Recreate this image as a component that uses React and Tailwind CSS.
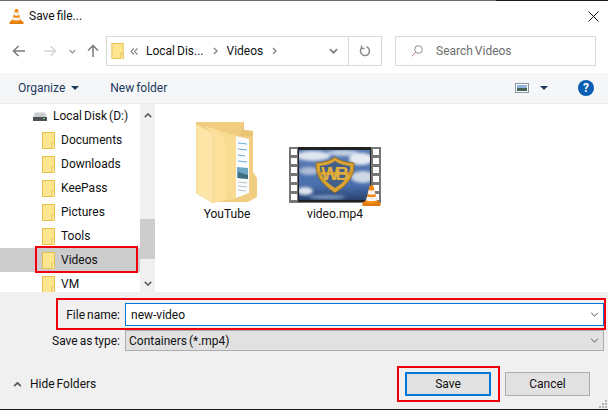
import { useId } from 'react'

const font = { fontFamily: 'Roboto, "Noto Sans", sans-serif' }

function Cone({ className }) {
  return (
    <svg viewBox="0 0 16 17" className={className}>
      <path d="M0.5 14.5 L3.5 12 H12.5 L15.5 14.5 V16.5 H0.5 Z" fill="#e07b0c" />
      <path d="M6.6 0.5 H9.4 L13 14 Q8 16 3 14 Z" fill="#f28a10" />
      <path d="M6 3.6 Q8 4.6 10 3.6 L10.9 7 Q8 8.2 5.1 7 Z" fill="#f4f4f4" />
      <path d="M4.6 9.2 Q8 10.5 11.4 9.2 L12.2 12 Q8 13.4 3.8 12 Z" fill="#f4f4f4" />
    </svg>
  )
}

function SmallFolder({ className }) {
  return (
    <svg viewBox="0 0 13 17" className={className}>
      <rect x="0.5" y="0.5" width="12" height="16" fill="#fde68f" stroke="#e8c04f" />
      <path d="M10 16.5 V10.5 H12.5 V16.5" fill="#ffefb0" stroke="#e8c04f" />
    </svg>
  )
}

function BigFolder() {
  return (
    <svg viewBox="0 0 62 82" className="h-[82px] w-[62px]">
      <path d="M0 0 H48 V8 L57 9 V50 L61 56 V75 L52 80 H20 L0 20 Z" fill="#f0cd80" />
      <path d="M48 0 V8 L57 9 V14 H44 Z" fill="#e9c374" />
      <path d="M40 14 L53 17 V71 L40 76 Z" fill="#fafbfd" />
      <path d="M42 21 L51 22 M42 27 L51 28 M42 33 L49 34 M42 39 L51 40" stroke="#62aee2" strokeWidth="1" />
      <path d="M41 45 L52 46 V57 L41 56 Z" fill="#6da6c4" />
      <path d="M42 50 L52 53 V57 L42 56 Z" fill="#3f6e7e" />
      <path d="M42 60 L51 61 M42 64 L51 65 M42 68 L50 69" stroke="#bcc0c6" strokeWidth="1" />
      <path d="M8 4 L40 14 V76 L17 81 V11 Z" fill="#fbe19c" />
      <path d="M22 8.5 L40 14 V76 L30 78 V20 Z" fill="#f9dc92" />
      <path d="M0 2 L17 11 V81 L0 71 Z" fill="#fce5a6" stroke="#f0cf82" strokeWidth="0.5" />
    </svg>
  )
}

function VideoThumb() {
  const id = useId()
  const blur = useId()
  const holes = [0, 1, 2, 3, 4, 5]
  return (
    <svg viewBox="0 0 93 59" className="h-[59px] w-[93px]">
      <defs>
        <linearGradient id={id} x1="0" y1="0" x2="0" y2="1">
          <stop offset="0" stopColor="#5a7cb4" />
          <stop offset="0.7" stopColor="#4a6fae" />
          <stop offset="1" stopColor="#28426f" />
        </linearGradient>
        <filter id={blur}>
          <feGaussianBlur stdDeviation="1.4" />
        </filter>
      </defs>
      <rect x="0" y="0" width="92" height="56" fill="#767676" />
      <rect x="9" y="0" width="73" height="55" fill="#222" />
      <svg x="10" y="3" width="71" height="50" viewBox="10 3 71 50">
        <rect x="10" y="3" width="71" height="50" fill={`url(#${id})`} />
        <g filter={`url(#${blur})`}>
          <ellipse cx="24" cy="9" rx="17" ry="5" fill="#dfe5ee" />
          <ellipse cx="54" cy="6" rx="16" ry="3" fill="#c6d2e4" />
          <ellipse cx="72" cy="12" rx="12" ry="6" fill="#e6ebf2" />
          <ellipse cx="20" cy="24" rx="10" ry="4" fill="#aebdd6" />
          <ellipse cx="74" cy="30" rx="12" ry="6" fill="#cdd7e6" />
          <ellipse cx="16" cy="44" rx="8" ry="4" fill="#dfe5ee" />
          <ellipse cx="38" cy="50" rx="18" ry="2" fill="#7e97bf" />
        </g>
      </svg>
      <path d="M27 16 Q40 15 46 10 Q52 15 65 16 Q67 33 46 46 Q25 33 27 16 Z" fill="#d8a334" stroke="#8a6418" strokeWidth="0.8" />
      <path d="M31 19 Q41 18 46 14 Q51 18 61 19 Q62 31 46 41 Q30 31 31 19 Z" fill="#44608a" />
      <rect x="29" y="25" width="34" height="3" fill="#c9952c" />
      <text x="46" y="33" textAnchor="middle" fontFamily="Liberation Sans, sans-serif" fontWeight="700" fontSize="19" textLength="28" fill="#e0ae3e">WB</text>
      {holes.map((i) => (
        <rect key={i} x="2" y={2 + i * 9} width="6" height="6" fill="#fff" />
      ))}
      {holes.map((i) => (
        <rect key={i} x="84" y={2 + i * 9} width="6" height="6" fill="#fff" />
      ))}
      <g transform="translate(73 38)">
        <path d="M0.5 18 L4 15 H15 L18.5 18 V21 H0.5 Z" fill="#dd7a0c" />
        <path d="M7.6 0.5 H11.4 L15.5 18 Q9.5 20 3.5 18 Z" fill="#f28a10" />
        <path d="M6.6 5 Q9.5 6 12.4 5 L13.3 9 Q9.5 10.5 5.7 9 Z" fill="#f4f4f4" />
        <path d="M5 11.5 Q9.5 13 14 11.5 L15 15.5 Q9.5 17 4 15.5 Z" fill="#f4f4f4" />
      </g>
    </svg>
  )
}

function Chevron({ className, up, width = 1.2 }) {
  return (
    <svg viewBox="0 0 10 6" className={className} fill="none" stroke="currentColor" strokeWidth={width}>
      <path d={up ? 'M1 5 L5 1 L9 5' : 'M1 1 L5 5 L9 1'} />
    </svg>
  )
}

function Crumb() {
  return (
    <svg viewBox="0 0 5 8" className="h-[8px] w-[5px]" fill="none" stroke="#8a8a8a" strokeWidth="1.5">
      <path d="M1 1 L4 4 L1 7" />
    </svg>
  )
}

function NavArrow({ className, d }) {
  return (
    <svg viewBox="0 0 14 14" className={className} fill="none" stroke="currentColor" strokeWidth="1.5">
      <path d={d} />
    </svg>
  )
}

function TreeRow({ name, selected }) {
  return (
    <div className={`flex h-6 shrink-0 items-center pl-[42px] ${selected ? 'bg-[#cccccc]' : ''}`}>
      <SmallFolder className="h-[17px] w-[13px]" />
      <span className="ml-[6px]">{name}</span>
    </div>
  )
}

export default function App() {
  const folders = ['Documents', 'Downloads', 'KeePass', 'Pictures', 'Tools', 'Videos', 'VM']

  return (
    <div style={font} className="relative flex h-[410px] w-[608px] flex-col overflow-hidden bg-white text-xs [word-spacing:-1px] text-[#111]">
      {/* window title */}
      <div className="flex h-[1px] shrink-0">
        <div className="w-[496px] bg-[#6c6c6c]" />
        <div className="flex-1 bg-[#1a1a1a]" />
      </div>
      <div className="flex h-[30px] shrink-0 items-center pl-[9px] pr-[8px]">
        <Cone className="h-[17px] w-[15px]" />
        <span className="ml-[5px]">Save file...</span>
        <svg viewBox="0 0 11 11" className="ml-auto mr-[1px] h-[11px] w-[11px]" stroke="#111" strokeWidth="1">
          <path d="M0.5 0.5 L10.5 10.5 M10.5 0.5 L0.5 10.5" />
        </svg>
      </div>

      {/* address row */}
      <div className="mt-[5px] flex h-[30px] shrink-0 items-center">
        <NavArrow className="ml-[12px] h-[14px] w-[14px] text-[#7a7a7a]" d="M13 7 H1.5 M6.5 2 L1.5 7 L6.5 12" />
        <NavArrow className="ml-[17px] h-[14px] w-[14px] text-[#d4d4d4]" d="M1 7 H12.5 M7.5 2 L12.5 7 L7.5 12" />
        <Chevron width={2} className="ml-[12px] h-[5px] w-[7px] text-[#9a9a9a]" />
        <NavArrow className="ml-[10px] h-[14px] w-[14px] text-[#7a7a7a]" d="M7 13 V1.5 M2 6.5 L7 1.5 L12 6.5" />
        <div className="ml-[6px] flex h-[30px] w-[276px] items-center border border-[#d9d9d9]">
          <SmallFolder className="ml-[4px] h-[16px] w-[13px]" />
          <svg viewBox="0 0 8 7" className="ml-[6px] h-[7px] w-[8px]" fill="none" stroke="#8a8a8a" strokeWidth="1.2">
            <path d="M4 0.5 L1 3.5 L4 6.5 M7.5 0.5 L4.5 3.5 L7.5 6.5" />
          </svg>
          <span className="ml-[8px]">Local Dis...</span>
          <span className="ml-[9px]"><Crumb /></span>
          <span className="ml-[9px]">Videos</span>
          <span className="ml-[9px]"><Crumb /></span>
          <Chevron width={2} className="ml-auto mr-[10px] h-[6px] w-[9px] text-[#808080]" />
          <div className="flex h-full w-[33px] items-center justify-center border-l border-[#d9d9d9]">
            <svg viewBox="0 0 12 12" className="h-[12px] w-[12px]" fill="none" stroke="#8a8a8a" strokeWidth="1.5">
              <path d="M7.5 1.8 A4.5 4.5 0 1 1 3 2.6 M2.5 0.5 V3.5 H5.5" />
            </svg>
          </div>
        </div>
        <div className="ml-[13px] flex h-[30px] w-[201px] items-center border border-[#d9d9d9] pl-[15px] text-[#6d6d6d]">
          <svg viewBox="0 0 12 12" className="h-[12px] w-[12px]" fill="none" strokeWidth="1">
            <circle cx="7.5" cy="4.5" r="3.8" stroke="#8c8c8c" />
            <path d="M4.8 7.2 L0.7 11.3" stroke="#c9709a" />
          </svg>
          <span className="ml-[13px]">Search Videos</span>
        </div>
      </div>

      {/* toolbar */}
      <div className="mt-[7px] flex h-[30px] shrink-0 items-center bg-[#f5f6f7] pl-[18px] text-[#1c3a5e]">
        <span>Organize</span>
        <span className="ml-[6px] h-0 w-0 border-x-[4px] border-t-[4px] border-x-transparent border-t-[#1c3a5e]" />
        <span className="ml-[31px]">New folder</span>
        <svg viewBox="0 0 14 10" className="ml-auto h-[10px] w-[14px]">
          <rect x="0.5" y="0.5" width="13" height="9" fill="#fff" stroke="#8d98a5" />
          <rect x="2" y="2" width="10" height="3" fill="#8fb6d8" />
          <rect x="2" y="5" width="10" height="3" fill="#42644f" />
        </svg>
        <span className="ml-[11px] h-0 w-0 border-x-[4px] border-t-[4px] border-x-transparent border-t-[#1c3a5e]" />
        <span className="ml-[30px] mr-[14px] flex h-4 w-4 items-center justify-center rounded-full bg-[#0a5fb4] text-xs font-bold leading-none text-white">?</span>
      </div>

      {/* tree and files */}
      <div className="flex h-[189px] shrink-0 overflow-hidden border-t border-[#ececec]">
        <div className="flex w-[140px] shrink-0 flex-col">
          <div className="flex h-6 shrink-0 items-center pl-[33px]">
            <svg viewBox="0 0 14 9" className="h-[9px] w-[14px]">
              <path d="M2 0.5 H12 L14 6 H0 Z" fill="#c9cccf" />
              <rect x="0" y="5" width="14" height="4" fill="#4d5157" />
              <rect x="10" y="6" width="2" height="1" fill="#6fdc6f" />
            </svg>
            <span className="ml-[6px]">Local Disk (D:)</span>
          </div>
          {folders.map((name) => (
            <TreeRow key={name} name={name} selected={name === 'Videos'} />
          ))}
        </div>
        <div className="flex w-[15px] shrink-0 flex-col items-center bg-[#f0f0f0] text-[#606060]">
          <Chevron up width={2} className="mt-[9px] h-[5px] w-[8px]" />
          <div className="mt-[101px] h-[40px] w-full bg-[#cdcdcd]" />
          <Chevron width={2} className="mt-[22px] h-[5px] w-[8px]" />
        </div>
        <div className="ml-[3px] flex flex-1 pl-[15px] pt-[18px]">
          <div className="flex w-[108px] flex-col items-center">
            <div className="flex h-[84px] items-end pb-[2px]">
              <BigFolder />
            </div>
            <span className="leading-4">YouTube</span>
          </div>
          <div className="flex w-[108px] flex-col items-center">
            <div className="flex h-[84px] items-end">
              <VideoThumb />
            </div>
            <span className="leading-4">video.mp4</span>
          </div>
        </div>
      </div>

      {/* footer */}
      <div className="flex flex-1 flex-col border-b border-[#1a1a1a] bg-[#f0f0f0] pt-[11px]">
        <div className="flex h-[23px] items-center">
          <span className="w-[120px] text-right">File name:</span>
          <div className="ml-[5px] flex h-full w-[479px] items-center border border-[#0078d7] bg-white pl-[5px] pr-[4px]">
            <span>new-video</span>
            <Chevron className="ml-auto h-[5px] w-[9px] text-[#555]" />
          </div>
        </div>
        <div className="mt-[4px] flex h-[21px] items-center">
          <span className="w-[120px] text-right">Save as type:</span>
          <div className="ml-[5px] flex h-full w-[479px] items-center border border-[#adadad] bg-[#e1e1e1] pl-[3px] pr-[4px]">
            <span>Containers (*.mp4)</span>
            <Chevron className="ml-auto h-[5px] w-[9px] text-[#555]" />
          </div>
        </div>
        <div className="mt-[21px] flex h-6 items-center pl-[13px]">
          <Chevron up width={2} className="h-[5px] w-[9px] text-[#555]" />
          <span className="ml-[8px]">Hide Folders</span>
          <button className="ml-auto flex h-6 w-[86px] items-center justify-center border-2 border-[#0078d7] bg-[#e1e1e1]">Save</button>
          <button className="ml-[14px] mr-[18px] flex h-6 w-[85px] items-center justify-center border border-[#adadad] bg-[#e1e1e1]">Cancel</button>
        </div>
      </div>

      {/* resize grip */}
      <svg viewBox="0 0 8 8" className="absolute bottom-[2px] right-[1px] h-2 w-2" fill="#b4b4b4">
        <rect x="6" y="0" width="2" height="2" />
        <rect x="3" y="3" width="2" height="2" />
        <rect x="6" y="3" width="2" height="2" />
        <rect x="0" y="6" width="2" height="2" />
        <rect x="3" y="6" width="2" height="2" />
        <rect x="6" y="6" width="2" height="2" />
      </svg>

      {/* red annotation boxes */}
      <div className="absolute left-[35px] top-[246px] h-[27px] w-[103px] border-2 border-[#f0000c]" />
      <div className="absolute left-[56px] top-[298px] h-[32px] w-[550px] border-2 border-[#f0000c]" />
      <div className="absolute left-[397px] top-[366px] h-[36px] w-[103px] border-2 border-[#f0000c]" />
    </div>
  )
}
